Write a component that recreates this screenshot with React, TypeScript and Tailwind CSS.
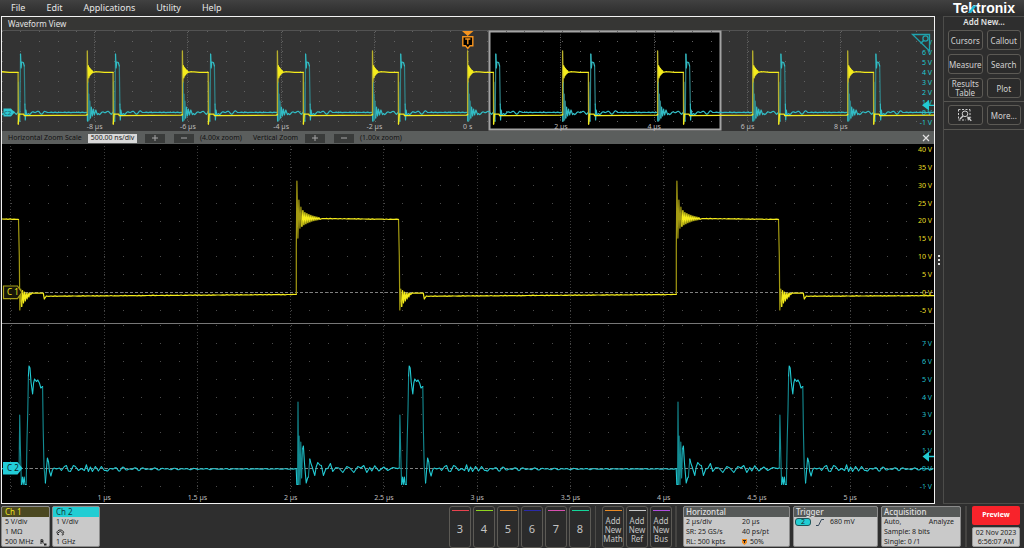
import React from "react";

type Point = [number, number];

const YELLOW = "#f5ec1c";
const YELLOW_DIM = "#a39a12";
const CYAN = "#22c9d2";
const CYAN_DIM = "#138b92";

const range = (n: number) => Array.from({ length: n }, (_, i) => i);

/** Draws a trace; fast vertical edges are dimmer than the slow parts, as on a phosphor screen. */
function Trace({ points, color, dim, width = 1 }: { points: Point[]; color: string; dim: string; width?: number }) {
  let slow = "";
  let fast = "";
  for (let i = 1; i < points.length; i++) {
    const [x0, y0] = points[i - 1];
    const [x1, y1] = points[i];
    const segment = `M${x0.toFixed(1)} ${y0.toFixed(1)}L${x1.toFixed(1)} ${y1.toFixed(1)}`;
    if (Math.abs(y1 - y0) > 16) fast += segment;
    else slow += segment;
  }
  return (
    <g fill="none" strokeLinecap="round">
      <path d={fast} stroke={dim} strokeWidth={width} />
      <path d={slow} stroke={color} strokeWidth={width} />
    </g>
  );
}

function line(x0: number, y0: number, x1: number, y1: number): Point[] {
  const n = Math.max(2, Math.round((x1 - x0) / 2));
  return range(n + 1).map((i): Point => [
    x0 + ((x1 - x0) * i) / n,
    y0 + ((y1 - y0) * i) / n + (i % n === 0 ? 0 : Math.sin(i * 2.7) * 0.25),
  ]);
}

function ring(x: number, center: number, up: number[], down: number[], step: number): Point[] {
  return up.flatMap((u, i): Point[] => [
    [x + i * step, center - u],
    [x + i * step + step / 2, center + down[i]],
  ]);
}

function ripple(x0: number, x1: number, base: number, amp: number, decay: number): Point[] {
  return range(Math.floor(x1 - x0)).map((i): Point => {
    const a = amp * Math.exp(-i / decay) + 0.25;
    return [x0 + i, base + a * (Math.sin(i * 0.62) * 0.6 + Math.sin(i * 0.97 + 1) * 0.6)];
  });
}

function offset(points: [number, number][], x: number): Point[] {
  return points.map(([px, py]): Point => [px + x, py]);
}

const RISE_UP = [37.5, 18.5, 11.5, 8, 6, 5, 4, 3.3, 2.6, 2, 1.5, 1];
const RISE_DOWN = [19.5, 9.5, 7.5, 6, 5, 4, 3.2, 2.6, 2, 1.6, 1.2, 0.8];

function ch1Rise(x: number): Point[] {
  return [[x, 294.3], [x, 248], ...ring(x + 0.6, 218.6, RISE_UP, RISE_DOWN, 2), ...line(x + 26, 218.5, x + 102, 219.4)];
}

function ch1Fall(x: number): Point[] {
  return [
    [x - 0.8, 219.5],
    [x, 256],
    [x + 0.5, 310],
    ...ring(x + 1.5, 296, [7, 5.5, 4, 3, 3, 3], [10.5, 7, 5, 3, 1, -1.5], 1.8),
    [x + 13, 292.8],
    [x + 24, 293.2],
    [x + 25, 299],
    [x + 27, 296],
  ];
}

const CH1: Point[] = [
  ...line(2, 219, 18, 219.3),
  ...ch1Fall(19.3),
  ...line(47, 296.2, 295, 294.5),
  ...ch1Rise(296.3),
  ...ch1Fall(399.3),
  ...line(427, 296.2, 675, 294.5),
  ...ch1Rise(676.3),
  ...ch1Fall(779.3),
  ...line(807, 296.2, 934, 295.6),
];

function ch2Fall(x: number): Point[] {
  return offset(
    [
      [-0.3, 468], [0.3, 415], [1.2, 456], [2, 484.5], [3, 477], [3.8, 484.5], [4.8, 477], [5.6, 484.5], [6.8, 484.5],
      [7.6, 440], [8.4, 410], [9, 376], [9.6, 366], [10.6, 368], [11.6, 382], [13.2, 394], [14.2, 383], [15.2, 379],
      [17, 381.5], [18.4, 380], [20, 383], [21.4, 388], [23.2, 386.5], [23.8, 430], [24.6, 466], [26, 483], [27, 470],
      [28, 458], [29.2, 462], [30, 471], [31.5, 476], [33, 470], [34.6, 468], [37, 469], [40, 468], [42, 470.5],
      [45, 466.5], [47, 465.5], [49, 471], [51, 471.5], [54, 465.5], [56, 466.5], [59, 470.5], [62, 468.5], [65, 470.5],
      [67, 464.8], [69, 471.5], [71, 467], [73, 471.5], [76, 466.5], [79, 471], [82, 466.5], [85, 470.5],
    ],
    x,
  );
}

function ch2Rise(x: number): Point[] {
  return offset(
    [
      [-0.6, 468.5], [0, 484.5], [0.8, 484.5], [1.2, 402], [1.8, 484.5], [2.3, 436], [3.2, 484.5], [4, 442], [4.8, 478],
      [5.8, 449], [6.6, 446], [7.6, 462], [8.6, 474], [9.4, 483], [10.8, 478], [11.6, 477], [13, 459], [14, 463],
      [15.4, 467], [16.6, 471], [18, 475.5], [19.4, 467], [21, 462.5], [23, 465], [24.6, 465.5], [26.6, 475.5],
      [29, 469], [31, 468.5], [33.6, 463.5], [36, 471.5], [39, 467.5], [42, 468], [46, 472.5], [50, 466.5], [53, 468],
      [57, 472.5], [61, 466.5], [64, 468], [67, 465.5], [70, 472.5], [73, 467.5], [75, 471], [78, 465.8], [82, 471],
      [87, 467], [91, 470.5], [96, 467.5], [101, 468.6],
    ],
    x,
  );
}

const CH2: Point[] = [
  ...line(2, 468.6, 18, 468.8),
  ...ch2Fall(19.4),
  ...ripple(106, 294, 469, 2.2, 45),
  ...ch2Rise(296.8),
  ...ch2Fall(399.6),
  ...ripple(486, 675, 469, 2.2, 45),
  ...ch2Rise(676.8),
  ...ch2Fall(779.6),
  ...ripple(866, 934, 469, 2.2, 45),
];

const PERIODS = range(11).map((i) => -7.7 + 95.05 * i);

function overviewCh1(): Point[] {
  return PERIODS.flatMap((x): Point[] => [
    [x, 114.6], [x, 82], [x, 51], [x + 0.5, 82],
    ...ring(x + 1, 71.8, [6, 4.5, 3.5, 2.5, 1.5, 0.8], [6, 4, 3, 2, 1.2, 0.6], 0.8),
    [x + 9, 71.7], [x + 17, 72.3], [x + 25.8, 72.3], [x + 26, 124], [x + 26.8, 114], [x + 31.5, 114.2],
    [x + 32, 115.7], [x + 94, 115.1],
  ]);
}

function overviewCh2(): Point[] {
  return PERIODS.flatMap((x): Point[] => [
    [x, 112.5], [x + 0.2, 121], [x + 0.8, 82], [x + 1, 121], [x + 1.6, 94], [x + 2, 120], [x + 2.6, 101],
    [x + 3.2, 118], [x + 4, 107], [x + 5, 116], [x + 6, 109], [x + 7, 115], [x + 8.4, 110], [x + 10, 114.5],
    ...ripple(x + 11, x + 25, 112.5, 2, 40),
    [x + 26, 112], [x + 26.2, 82], [x + 26.6, 121], [x + 27.6, 121], [x + 28.2, 54], [x + 28.8, 68], [x + 29.4, 62],
    [x + 31, 62.5], [x + 32, 66], [x + 32.6, 104], [x + 33, 120], [x + 33.6, 110], [x + 34.4, 115],
    ...ripple(x + 36, x + 54, 112.4, 2.2, 28),
    ...line(x + 55, 112.4, x + 94, 112.4),
  ]);
}

function Dots({ xs, ys, color }: { xs: number[]; ys: number[]; color: string }) {
  return (
    <path
      stroke={color}
      strokeWidth={1}
      d={ys.map((y) => xs.map((x) => `M${Math.round(x)} ${Math.floor(y)}.5h1`).join("")).join("")}
    />
  );
}

const LABEL = "[font-family:'Noto_Sans',sans-serif] text-[7px]";

function Overview() {
  const cols = range(50).map((i) => 1.7 + 18.66 * i);
  const rows = range(10).map((i) => 31.5 + 10.05 * i);
  const times = [-8, -6, -4, -2, 0, 2, 4, 6, 8];
  return (
    <svg viewBox="2 30 932 101" className="block h-auto w-full bg-[#333333]" role="img" aria-label="Acquisition overview">
      <path d="M2 30.5H934" stroke="#525252" />
      <rect x={489.5} y={31.5} width={231} height={98} fill="#000" stroke="#a3a3a3" strokeWidth={2} />
      <Dots xs={cols} ys={rows} color="#626262" />
      {times.map((t) => (
        <path key={t} d={`M${Math.floor(467.7 + t * 46.63)}.5 32V122`} stroke="#626262" strokeDasharray="1 1.5" />
      ))}
      <Trace points={overviewCh2()} color="#32bcc4" dim="#30868b" width={1.2} />
      <Trace points={overviewCh1()} color={YELLOW} dim="#b8b02c" width={1.3} />
      <g className={LABEL} fill="#bdbdbd" textAnchor="middle">
        {times.map((t) => (
          <text key={t} x={467.7 + t * 46.63} y={129}>{t === 0 ? "0 s" : `${t} µs`}</text>
        ))}
      </g>
      <g className={LABEL} fill="#22c9d2" textAnchor="end">
        {[7, 6, 5, 4, 3, 2, 1, 0, -1].map((v) => (
          <text key={v} x={932} y={115 - v * 10.05}>{v} V</text>
        ))}
      </g>
      <path d="M912.5 34.5H929.5V51Z" fill="#333333" stroke="#1fa3ae" strokeWidth={1.3} />
      <circle cx={925.5} cy={38.5} r={2.6} fill="#333333" stroke="#1fa3ae" strokeWidth={1.3} />
      <path d="M923.8 40.4L920.5 43.5" stroke="#1fa3ae" strokeWidth={1.5} />
      <path d="M922 105.3L929 100V104.8H934V106H929V110.6Z" fill={CYAN} />
      <path d="M3.5 108.5H11L14.5 112.5L11 116.5H3.5Z" fill="#2fc8d2" />
      <text x={4} y={115} className="text-[6px] font-semibold [font-family:'Noto_Sans',sans-serif]" fill="#1d6e78">C2</text>
      <path d="M462 31H473.5L467.7 36Z" fill="#f7941e" />
      <path d="M462.8 36.8H472.8V45.8H470L467.8 48.5L465.6 45.8H462.8Z" fill="#000" stroke="#f7941e" strokeWidth={1.4} />
      <path d="M465.2 39H470.4M467.8 39V44.2" stroke="#f7941e" strokeWidth={1.4} />
    </svg>
  );
}

function MainPlot() {
  const cols = range(50).map((i) => 10.8 + 18.65 * i);
  const majors = range(10).map((i) => 10.9 + 93.25 * i);
  return (
    <svg viewBox="2 144 932 359" className="block h-auto w-full bg-black" role="img" aria-label="Zoomed waveforms of channel 1 and channel 2">
      <Dots xs={cols} ys={range(10).map((i) => 149.5 + 17.9 * i)} color="#4b4b4b" />
      <Dots xs={cols} ys={range(10).map((i) => 325.6 + 17.85 * i)} color="#4b4b4b" />
      {majors.map((x) => (
        <path key={x} d={`M${Math.floor(x)}.5 146V322M${Math.floor(x)}.5 326V492`} stroke="#3c3c3c" strokeDasharray="1 2" />
      ))}
      <path d="M2 323.5H934" stroke="#777777" strokeWidth={1} />
      <path d="M20 292.5H934" stroke="#808080" strokeDasharray="3 2" />
      <path d="M20 468.5H934" stroke="#808080" strokeDasharray="3 2" />
      <Trace points={CH2} color={CYAN} dim={CYAN_DIM} width={1.1} />
      <Trace points={CH1} color={YELLOW} dim={YELLOW_DIM} width={1.2} />
      <g className={LABEL} fill="#e6dd20" textAnchor="end">
        {[40, 35, 30, 25, 20, 15, 10, 5, 0, -5].map((v) => (
          <text key={v} x={932} y={295 - v * 3.58}>{v} V</text>
        ))}
      </g>
      <g className={LABEL} fill="#1fbcc5" textAnchor="end">
        {[7, 6, 5, 4, 3, 2, 1, 0, -1].map((v) => (
          <text key={v} x={932} y={471 - v * 17.85}>{v} V</text>
        ))}
      </g>
      <g className={LABEL} fill="#bdbdbd" textAnchor="middle">
        {["1", "1.5", "2", "2.5", "3", "3.5", "4", "4.5", "5"].map((t, i) => (
          <text key={t} x={104.2 + 93.25 * i} y={500}>{t} µs</text>
        ))}
      </g>
      <path d="M3.5 286H17.5L22 292.3L17.5 298.7H3.5Z" fill="#17160a" stroke="#a89f18" strokeWidth={1.2} />
      <text x={7} y={295.3} className="text-[8px] [font-family:'Noto_Sans',sans-serif]" fill="#efe51c">C 1</text>
      <path d="M3 462H17.5L22.5 468.3L17.5 474.5H3Z" fill="#22cdd8" />
      <text x={7} y={471.3} className="text-[8px] [font-family:'Noto_Sans',sans-serif]" fill="#0b2426">C 2</text>
      <path d="M922.5 456.5L929 451.5V455.8H934V457.2H929V461.8Z" fill={CYAN} />
    </svg>
  );
}

function ZoomStep({ label, sign }: { label: string; sign: string }) {
  return (
    <button type="button" aria-label={label} className="flex h-[9px] w-5 items-center justify-center bg-[#393b3a] text-[#a5a5a5]">
      <svg viewBox="0 0 8 8" className="size-2" fill="none" stroke="currentColor">
        <path d={sign} />
      </svg>
    </button>
  );
}

const PLUS = "M1 4H7M4 1V7";
const MINUS = "M1 4H7";

function ZoomBar() {
  return (
    <div className="flex h-[13px] items-center bg-[#5b5e5d] pt-px pr-1 pl-1.5 text-[7px] text-[#111111]">
      <label htmlFor="scale" className="w-20 whitespace-nowrap">Horizontal Zoom Scale</label>
      <input id="scale" defaultValue="500.00 ns/div" className="h-[9px] w-[49px] bg-[#d9d9d9] text-center text-[7px] text-[#222222]" />
      <div className="ml-2 flex w-[55px] gap-[9px]">
        <ZoomStep label="Increase horizontal zoom" sign={PLUS} />
        <ZoomStep label="Decrease horizontal zoom" sign={MINUS} />
      </div>
      <span className="w-[53px] whitespace-nowrap">(4.00x zoom)</span>
      <span className="w-[52px] whitespace-nowrap">Vertical Zoom</span>
      <div className="flex w-[55px] gap-[9px]">
        <ZoomStep label="Increase vertical zoom" sign={PLUS} />
        <ZoomStep label="Decrease vertical zoom" sign={MINUS} />
      </div>
      <span className="whitespace-nowrap">(1.00x zoom)</span>
      <button type="button" aria-label="Close zoom" className="ml-auto">
        <svg viewBox="0 0 8 8" className="size-2" stroke="#e2e2e2" strokeWidth={1.2}>
          <path d="M1 1L7 7M7 1L1 7" />
        </svg>
      </button>
    </div>
  );
}

const SIDE_BUTTON =
  "flex h-[20px] items-center justify-center rounded-[3px] border border-[#5c5a55] bg-[#2b2b2b] text-center text-[8px] leading-[9px] text-[#d2d2d2]";

function Sidebar() {
  return (
    <aside className="w-[81px] border-y border-l border-[#4c4c4a] bg-[#2e2e2e]">
      <h2 className="text-center text-[8px] leading-[10px] font-semibold text-[#e4e4e4]">Add New...</h2>
      <div className="mt-[3px] grid grid-cols-2 gap-x-1 gap-y-1 border-b border-[#575652] pr-[3px] pb-[3px] pl-1">
        {["Cursors", "Callout", "Measure", "Search", "Results Table", "Plot"].map((name) => (
          <button key={name} type="button" className={SIDE_BUTTON}>{name}</button>
        ))}
      </div>
      <div className="grid grid-cols-2 gap-x-1 border-b border-[#575652] pt-[3px] pr-[3px] pb-1 pl-1">
        <button type="button" aria-label="Zoom" className={SIDE_BUTTON}>
          <svg viewBox="0 0 16 14" className="h-[14px] w-4" fill="none" stroke="#cfcfcf">
            <path d="M1.5 1.5H13M1.5 1.5V12M13 1.5V9M1.5 12H9" strokeDasharray="2 1.5" />
            <circle cx={8} cy={5.8} r={2.8} />
            <path d="M6 8L3 11" strokeWidth={1.5} />
            <path d="M10 8.5L14.5 9.5L13 10.6L14.8 12.4L13.8 13.2L12 11.6L11 13Z" fill="#cfcfcf" stroke="none" />
          </svg>
        </button>
        <button type="button" className={SIDE_BUTTON}>More...</button>
      </div>
    </aside>
  );
}

const CHANNELS = [
  { name: "3", color: "bg-[#e8434f]" },
  { name: "4", color: "bg-[#8fd420]" },
  { name: "5", color: "bg-[#f0922b]" },
  { name: "6", color: "bg-[#2a2aa8]" },
  { name: "7", color: "bg-[#d84fb0]" },
  { name: "8", color: "bg-[#14d69a]" },
];

const ADDERS = [
  { name: "Add New Math", color: "bg-[#e88a25]" },
  { name: "Add New Ref", color: "bg-[#c8c8c8]" },
  { name: "Add New Bus", color: "bg-[#b04fe0]" },
];

function SlotButton({ name, color, small }: { name: string; color: string; small?: boolean }) {
  return (
    <button type="button" className="flex h-[42px] w-[22px] flex-col items-center rounded-[3px] border border-[#5c5a55] bg-[#2b2b2b] pt-[3px] text-[#c4c4c4]">
      <span className={`h-px w-[17px] shrink-0 ${color}`} />
      <span className={small ? "flex grow items-center text-[8px] leading-[9px]" : "flex grow items-center text-[11px] leading-3"}>{name}</span>
    </button>
  );
}

const PANEL = "h-[41px] shrink-0 overflow-hidden rounded-[2px] border border-[#8b8b8b] bg-[#c9c9c9] text-[7px] leading-[10px] whitespace-nowrap text-[#1f1f1f]";
const PANEL_HEAD = "bg-[#565958] pl-0.5 text-[8px] leading-[10px] font-medium text-[#e0e0e0]";

function BottomBar() {
  return (
    <footer className="flex h-11 items-start bg-[#2e2e2e] pt-[2px] pr-1 pl-px">
      <section className={`${PANEL} w-[49px]`}>
        <h2 className="bg-[#4b4821] pl-[3px] text-[8px] leading-[10px] text-[#efe51c]">Ch 1</h2>
        <div className="pl-[3px]">
          <p>5 V/div</p>
          <p>1 MΩ</p>
          <p className="flex items-center gap-1.5">
            500 MHz
            <svg viewBox="0 0 7 7" className="size-[7px]" fill="none" stroke="#1f1f1f">
              <path d="M1 0.5V5M1 0.8H2.8L3 2.5H1M2.8 2.6L3.2 4.6" />
              <path d="M4 4.5H6.5V6.5H4Z" fill="#1f1f1f" stroke="none" />
            </svg>
          </p>
        </div>
      </section>
      <section className={`${PANEL} ml-[2px] w-[48px]`}>
        <h2 className="bg-[#22cdd3] pl-[3px] text-[8px] leading-[10px] text-[#123a3c]">Ch 2</h2>
        <div className="pl-[3px]">
          <p>1 V/div</p>
          <p className="flex h-[10px] items-center">
            <svg viewBox="0 0 9 7" className="h-[7px] w-[9px]" fill="none" stroke="#1f1f1f">
              <path d="M0.8 3.8C1.5 0 7 0 7.8 3.8M3 5.5C1 6.3 0.8 4.2 2 3.8C3.5 3.2 4 2 4.6 2.4C5 3 6 3.5 6.8 4.2C8 5 7.5 6.3 5.8 5.8" />
            </svg>
          </p>
          <p>1 GHz</p>
        </div>
      </section>
      <div className="ml-auto flex gap-[2px]">
        {CHANNELS.map((c) => (
          <SlotButton key={c.name} {...c} />
        ))}
      </div>
      <div className="ml-[4px] flex gap-[2px] border-l border-[#4c4b48] pl-[6px]">
        {ADDERS.map((a) => (
          <SlotButton key={a.name} {...a} small />
        ))}
      </div>
      <div className="ml-[3px] flex gap-[3px] border-l-2 border-[#454442] pl-[6px]">
        <section className={`${PANEL} w-[107px]`}>
          <h2 className={PANEL_HEAD}>Horizontal</h2>
          <div className="grid grid-cols-[56px_1fr] pl-0.5">
            <p>2 µs/div</p>
            <p>20 µs</p>
            <p>SR: 25 GS/s</p>
            <p>40 ps/pt</p>
            <p>RL: 500 kpts</p>
            <p className="flex items-center gap-[3px]">
              <svg viewBox="0 0 5 6" className="h-[6px] w-[5px]">
                <path d="M0 0H5V3.8L2.5 6L0 3.8Z" fill="#f08a1c" />
                <path d="M1 1H4V2H3V4H2V2H1Z" fill="#1f1f1f" />
              </svg>
              50%
            </p>
          </div>
        </section>
        <section className={`${PANEL} w-[85px]`}>
          <h2 className={PANEL_HEAD}>Trigger</h2>
          <p className="flex items-center pl-px">
            <span className="h-[8px] w-4 rounded-[3px] border border-[#1f5558] bg-[#22cdd3] text-center text-[7px] leading-[6px]">2</span>
            <svg viewBox="0 0 8 7" className="ml-[5px] h-[7px] w-2" fill="none" stroke="#34475a">
              <path d="M0 6.5H2.5L5.5 0.5H8" />
            </svg>
            <span className="ml-[6px]">680 mV</span>
          </p>
        </section>
        <section className={`${PANEL} w-[80px]`}>
          <h2 className={PANEL_HEAD}>Acquisition</h2>
          <div className="pr-[6px] pl-0.5">
            <p className="flex justify-between"><span>Auto,</span><span>Analyze</span></p>
            <p>Sample: 8 bits</p>
            <p>Single: 0 /1</p>
          </div>
        </section>
      </div>
      <div className="ml-[4px] flex w-[55px] flex-col gap-[2px] border-l-2 border-[#454442] pl-[5px]">
        <button type="button" className="h-[19px] rounded-[2px] bg-[#f8232b] text-[7px] font-bold text-white">Preview</button>
        <div className="h-[20px] rounded-[2px] border border-[#9a9a9a] bg-[#cccccc] text-center text-[7px] leading-[9px] whitespace-nowrap text-[#1f1f1f]">
          <p>02 Nov 2023</p>
          <p>6:56:07 AM</p>
        </div>
      </div>
    </footer>
  );
}

export default function App() {
  return (
    <div className="flex min-h-screen flex-col bg-[#2e2e2e] font-['Noto_Sans',sans-serif]">
      <header className="flex h-4 items-center justify-between bg-linear-to-b from-[#414141] to-[#2b2b2b] pr-1 pl-[11px]">
        <nav className="flex gap-[21px] text-[9px] leading-4 text-[#e6e6e6]">
          {["File", "Edit", "Applications", "Utility", "Help"].map((item) => (
            <a key={item} href="#">{item}</a>
          ))}
        </nav>
        <svg viewBox="0 0 68 16" className="h-4 w-[68px]" role="img" aria-label="Tektronix">
          <text x={1} y={13} className="text-[14px] font-bold [font-family:'Liberation_Sans',sans-serif]" fill="#ffffff">Tektronix</text>
          <path d="M16 13L21.5 5.5H24.5L19 13Z" fill="#19b9d1" />
        </svg>
      </header>
      <div className="flex">
        <main className="ml-px min-w-0 flex-1 border border-[#f2f2f2]">
          <h1 className="h-[13px] bg-[#363634] pl-1.5 text-[8px] leading-[14px] text-[#e4e4e4]">Waveform View</h1>
          <Overview />
          <ZoomBar />
          <MainPlot />
        </main>
        <div className="flex w-2 flex-col items-center justify-center gap-[2px]">
          {range(3).map((i) => (
            <span key={i} className="size-[2px] bg-[#e0e0e0]" />
          ))}
        </div>
        <Sidebar />
      </div>
      <BottomBar />
    </div>
  );
}
